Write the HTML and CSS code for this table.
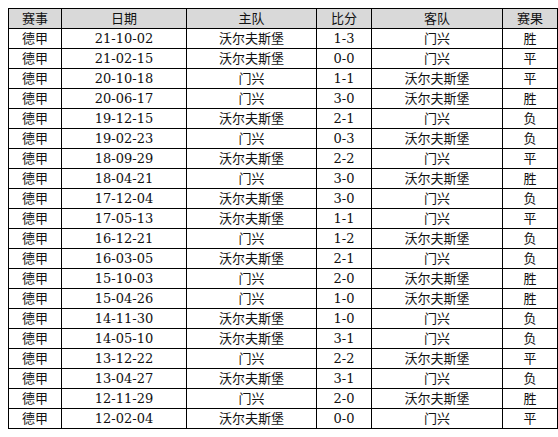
FILE: index.html
```html
<!DOCTYPE html>
<html>
<head>
<meta charset="utf-8">
<link rel="stylesheet" href="styles.css">
</head>
<body>
<table class="tbl">
<colgroup>
<col class="c1"><col class="c2"><col class="c3"><col class="c4"><col class="c5"><col class="c6">
</colgroup>
<thead>
<tr><th>赛事</th><th>日期</th><th>主队</th><th>比分</th><th>客队</th><th>赛果</th></tr>
</thead>
<tbody>
<tr><td>德甲</td><td>21-10-02</td><td>沃尔夫斯堡</td><td>1-3</td><td>门兴</td><td>胜</td></tr>
<tr><td>德甲</td><td>21-02-15</td><td>沃尔夫斯堡</td><td>0-0</td><td>门兴</td><td>平</td></tr>
<tr><td>德甲</td><td>20-10-18</td><td>门兴</td><td>1-1</td><td>沃尔夫斯堡</td><td>平</td></tr>
<tr><td>德甲</td><td>20-06-17</td><td>门兴</td><td>3-0</td><td>沃尔夫斯堡</td><td>胜</td></tr>
<tr><td>德甲</td><td>19-12-15</td><td>沃尔夫斯堡</td><td>2-1</td><td>门兴</td><td>负</td></tr>
<tr><td>德甲</td><td>19-02-23</td><td>门兴</td><td>0-3</td><td>沃尔夫斯堡</td><td>负</td></tr>
<tr><td>德甲</td><td>18-09-29</td><td>沃尔夫斯堡</td><td>2-2</td><td>门兴</td><td>平</td></tr>
<tr><td>德甲</td><td>18-04-21</td><td>门兴</td><td>3-0</td><td>沃尔夫斯堡</td><td>胜</td></tr>
<tr><td>德甲</td><td>17-12-04</td><td>沃尔夫斯堡</td><td>3-0</td><td>门兴</td><td>负</td></tr>
<tr><td>德甲</td><td>17-05-13</td><td>沃尔夫斯堡</td><td>1-1</td><td>门兴</td><td>平</td></tr>
<tr><td>德甲</td><td>16-12-21</td><td>门兴</td><td>1-2</td><td>沃尔夫斯堡</td><td>负</td></tr>
<tr><td>德甲</td><td>16-03-05</td><td>沃尔夫斯堡</td><td>2-1</td><td>门兴</td><td>负</td></tr>
<tr><td>德甲</td><td>15-10-03</td><td>门兴</td><td>2-0</td><td>沃尔夫斯堡</td><td>胜</td></tr>
<tr><td>德甲</td><td>15-04-26</td><td>门兴</td><td>1-0</td><td>沃尔夫斯堡</td><td>胜</td></tr>
<tr><td>德甲</td><td>14-11-30</td><td>沃尔夫斯堡</td><td>1-0</td><td>门兴</td><td>负</td></tr>
<tr><td>德甲</td><td>14-05-10</td><td>沃尔夫斯堡</td><td>3-1</td><td>门兴</td><td>负</td></tr>
<tr><td>德甲</td><td>13-12-22</td><td>门兴</td><td>2-2</td><td>沃尔夫斯堡</td><td>平</td></tr>
<tr><td>德甲</td><td>13-04-27</td><td>沃尔夫斯堡</td><td>3-1</td><td>门兴</td><td>负</td></tr>
<tr><td>德甲</td><td>12-11-29</td><td>门兴</td><td>2-0</td><td>沃尔夫斯堡</td><td>胜</td></tr>
<tr><td>德甲</td><td>12-02-04</td><td>沃尔夫斯堡</td><td>0-0</td><td>门兴</td><td>平</td></tr>
</tbody>
</table>
</body>
</html>
```
FILE: styles.css
```css
html, body {
  margin: 0;
  padding: 0;
  background: #ffffff;
}
body {
  padding: 8px 0 0 8px;
}
.tbl {
  border-collapse: collapse;
  table-layout: fixed;
  width: 549px;
  font-family: "DejaVu Serif", "Noto Sans CJK SC", serif;
  font-size: 13px;
  color: #111111;
}
.c1 { width: 53px; }
.c2 { width: 125px; }
.c3 { width: 130px; }
.c4 { width: 55px; }
.c5 { width: 131px; }
.c6 { width: 55px; }
.tbl th,
.tbl td {
  border: 1px solid #000000;
  height: 19px;
  padding: 0;
  text-align: center;
  vertical-align: middle;
  line-height: 18px;
  font-weight: normal;
  white-space: nowrap;
}
.tbl th {
  background: #d9d9d9;
}
```
